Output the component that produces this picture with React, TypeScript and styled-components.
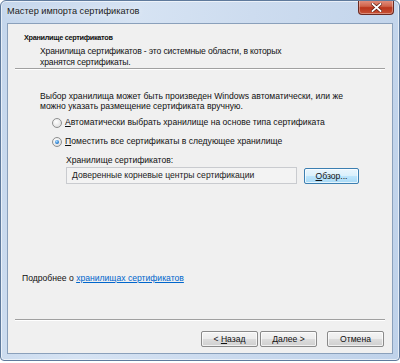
import styled, { createGlobalStyle } from 'styled-components';

const GlobalStyle = createGlobalStyle`
  html, body {
    margin: 0;
    padding: 0;
    background: #ffffff;
  }
  body {
    font-family: 'Liberation Sans', Arial, sans-serif;
  }
`;

const Window = styled.div`
  width: 400px;
  height: 361px;
  box-sizing: border-box;
  display: flex;
  flex-direction: column;
  border: 1px solid #5f7a9c;
  border-radius: 6px 6px 4px 4px;
  background: linear-gradient(100deg, #c4d6ec 0%, #d6e3f3 30%, #cddcef 55%, #bfd2ea 100%);
  box-shadow: inset 0 0 0 1px rgba(255, 255, 255, 0.6);
  overflow: hidden;
`;

const TitleBar = styled.div`
  height: 22px;
  display: flex;
  align-items: flex-start;
  justify-content: space-between;
  padding-left: 6px;
`;

const Caption = styled.span`
  font-size: 9.2px;
  color: #1a1a1a;
  line-height: 21px;
  text-shadow: 0 0 6px rgba(255, 255, 255, 0.9);
`;

const CloseButton = styled.div`
  width: 36px;
  height: 15px;
  margin-right: 5px;
  margin-top: -1px;
  box-sizing: border-box;
  border: 1px solid #6b2a22;
  border-top: none;
  border-radius: 0 0 4px 4px;
  background: linear-gradient(#e39484 0%, #d0634a 45%, #b9351c 55%, #c85236 100%);
  box-shadow: inset 0 0 0 1px rgba(255, 255, 255, 0.35);
  display: flex;
  align-items: center;
  justify-content: center;
`;

const Client = styled.div`
  flex: 1;
  margin: 0 6px 6px 6px;
  border: 1px solid #8aa0bb;
  background: #f0f0f0;
  display: flex;
  flex-direction: column;
  color: #111;
  font-size: 8.6px;
`;

const Header = styled.div`
  height: 44px;
  padding: 8px 0 0 16px;
  box-sizing: border-box;
`;

const HeaderTitle = styled.div`
  font-weight: bold;
  font-size: 7.3px;
  letter-spacing: -0.3px;
  line-height: 11px;
  margin-bottom: 3px;
`;

const HeaderText = styled.div`
  padding-left: 16px;
  line-height: 11px;
  letter-spacing: -0.15px;
`;

const Rule = styled.div`
  height: 0;
  margin: 0 7px;
  border-top: 1px solid #a0a0a0;
  border-bottom: 1px solid #ffffff;
`;

const Body = styled.div`
  flex: 1;
  padding: 21px 0 0 32px;
  display: flex;
  flex-direction: column;
`;

const Paragraph = styled.div`
  line-height: 10px;
`;

const Options = styled.div`
  display: flex;
  flex-direction: column;
  gap: 8px;
  margin: 6px 0 0 12px;
`;

const RadioRow = styled.div`
  display: flex;
  align-items: center;
  gap: 3px;
  line-height: 11px;
`;

const Radio = styled.span<{ checked?: boolean }>`
  width: 10px;
  height: 10px;
  box-sizing: border-box;
  border-radius: 50%;
  border: 1px solid #8e8f8f;
  background: radial-gradient(circle at 40% 35%, #ffffff 0%, #e3e3e3 70%, #cfcfcf 100%);
  display: flex;
  align-items: center;
  justify-content: center;
  &::after {
    content: '';
    display: ${(p) => (p.checked ? 'block' : 'none')};
    width: 4px;
    height: 4px;
    border-radius: 50%;
    background: radial-gradient(circle at 40% 35%, #a9dbff 0%, #2a7fd0 60%, #19509a 100%);
  }
`;

const StoreBlock = styled.div`
  margin: 8px 0 0 26px;
  display: flex;
  flex-direction: column;
  gap: 2px;
`;

const StoreRow = styled.div`
  display: flex;
  align-items: center;
  gap: 7px;
`;

const TextField = styled.div`
  width: 231px;
  height: 17px;
  box-sizing: border-box;
  border: 1px solid #c9cbcf;
  background: #f3f3f3;
  padding-left: 5px;
  line-height: 15px;
  color: #222;
`;

const Button = styled.div<{ focused?: boolean }>`
  width: ${(p) => (p.focused ? '55px' : '57px')};
  height: 16px;
  box-sizing: border-box;
  border: 1px solid ${(p) => (p.focused ? '#3c7fb1' : '#8a8a8a')};
  border-radius: 2px;
  background: ${(p) =>
    p.focused
      ? 'linear-gradient(#eaf6fd 0%, #d9f0fc 50%, #bee6fd 51%, #a7d9f5 100%)'
      : 'linear-gradient(#f4f4f4 0%, #ececec 50%, #dddddd 51%, #cfcfcf 100%)'};
  box-shadow: inset 0 0 0 1px rgba(255, 255, 255, 0.7);
  display: flex;
  align-items: center;
  justify-content: center;
  color: #111;
`;

const Spacer = styled.div`
  flex: 1;
`;

const MoreInfo = styled.div`
  margin: 0 0 36px -18px;
`;

const Link = styled.a`
  color: #0066cc;
  text-decoration: underline;
`;

const Footer = styled.div`
  flex: 0 0 32px;
  display: flex;
  align-items: flex-start;
  justify-content: flex-end;
  padding: 10px 8px 0 0;
  box-sizing: border-box;
`;

const ButtonGroup = styled.div`
  display: flex;
  gap: 2px;
  margin-right: 10px;
`;

const U = styled.span`
  text-decoration: underline;
`;

export default function App() {
  return (
    <>
      <GlobalStyle />
      <Window>
        <TitleBar>
          <Caption>Мастер импорта сертификатов</Caption>
          <CloseButton>
            <svg width="11" height="9" viewBox="0 0 11 9">
              <path d="M1.5 1 L9.5 8 M9.5 1 L1.5 8" stroke="#5a1a10" strokeWidth="3.2" strokeLinecap="square" />
              <path d="M1.5 1 L9.5 8 M9.5 1 L1.5 8" stroke="#ffffff" strokeWidth="1.8" strokeLinecap="square" />
            </svg>
          </CloseButton>
        </TitleBar>
        <Client>
          <Header>
            <HeaderTitle>Хранилище сертификатов</HeaderTitle>
            <HeaderText>
              Хранилища сертификатов - это системные области, в которых
              <br />
              хранятся сертификаты.
            </HeaderText>
          </Header>
          <Rule />
          <Body>
            <Paragraph>
              Выбор хранилища может быть произведен Windows автоматически, или же
              <br />
              можно указать размещение сертификата вручную.
            </Paragraph>
            <Options>
              <RadioRow>
                <Radio />
                <span>
                  <U>А</U>втоматически выбрать хранилище на основе типа сертификата
                </span>
              </RadioRow>
              <RadioRow>
                <Radio checked />
                <span>
                  <U>П</U>оместить все сертификаты в следующее хранилище
                </span>
              </RadioRow>
            </Options>
            <StoreBlock>
              <span>Хранилище сертификатов:</span>
              <StoreRow>
                <TextField>Доверенные корневые центры сертификации</TextField>
                <Button focused>
                  <span>
                    <U>О</U>бзор...
                  </span>
                </Button>
              </StoreRow>
            </StoreBlock>
            <Spacer />
            <MoreInfo>
              Подробнее о <Link>хранилищах сертификатов</Link>
            </MoreInfo>
          </Body>
          <Rule />
          <Footer>
            <ButtonGroup>
              <Button>
                <span>
                  &lt; <U>Н</U>азад
                </span>
              </Button>
              <Button>
                <span>
                  <U>Д</U>алее &gt;
                </span>
              </Button>
            </ButtonGroup>
            <Button>Отмена</Button>
          </Footer>
        </Client>
      </Window>
    </>
  );
}
